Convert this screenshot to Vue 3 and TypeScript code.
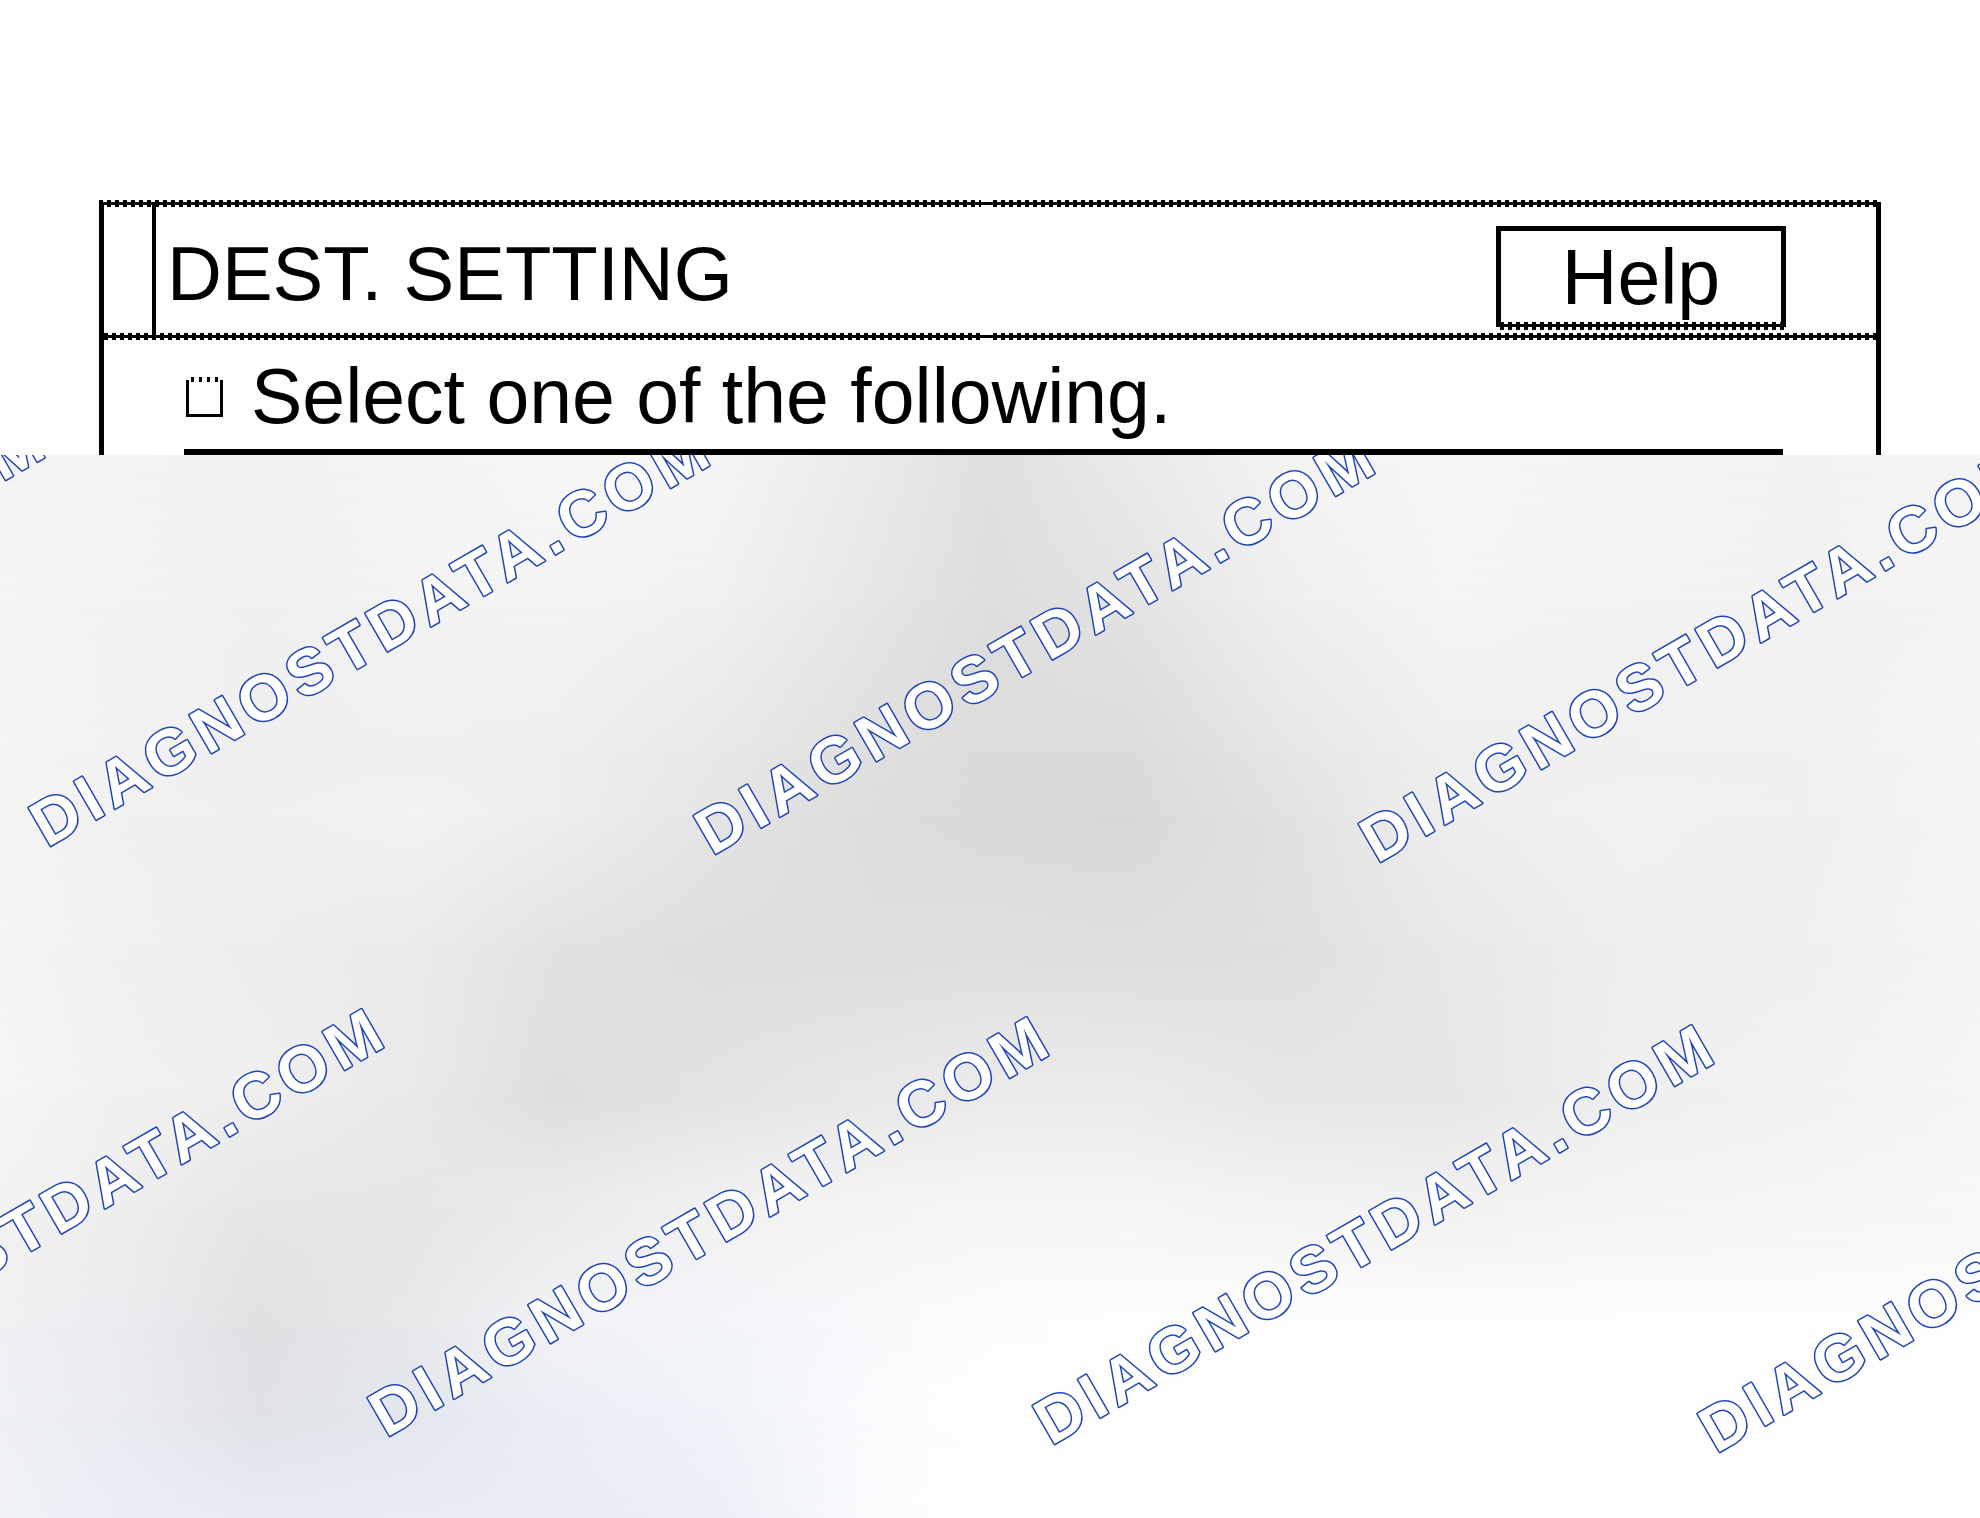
<script setup lang="ts">
import { ref } from 'vue'

interface Mark {
  x: number
  y: number
}

interface Band {
  at: number
  colors: string[]
}

const selected = ref<boolean>(false)

// Origins of the repeated watermark: each row shifts sideways and drops slightly per column.
const rows: Mark[] = [
  { x: -618, y: 385 },
  { x: -279, y: 975 },
]
const marks: Mark[] = rows.flatMap((row) =>
  [0, 1, 2, 3].map((column) => ({ x: row.x + column * 665, y: row.y + column * 8 })),
)

// Horizontal colour bands of the shaded backdrop; each one fades in over the band above it.
const stops: number[] = [0, 6, 13, 21, 28, 36, 44, 50, 57, 65, 73, 82, 91, 100]
const bands: Band[] = [
  { at: 0, colors: ['#f5f5f5', '#f4f4f4', '#f2f2f2', '#f5f5f5', '#f7f7f7', '#f6f6f6', '#ebebeb', '#e1e1e1', '#eaeaea', '#f4f4f4', '#f7f7f7', '#f5f5f5', '#f3f3f3', '#f5f5f5'] },
  { at: 14, colors: ['#f5f5f5', '#f3f3f3', '#f1f1f1', '#f3f3f3', '#f4f4f4', '#f1f1f1', '#e6e6e6', '#dedede', '#e3e3e3', '#efefef', '#f5f5f5', '#f3f3f3', '#f2f2f2', '#f4f4f4'] },
  { at: 28, colors: ['#f5f5f5', '#f2f2f2', '#efefef', '#f0f0f0', '#efefef', '#e8e8e8', '#dfdfdf', '#dbdbdb', '#dbdbdb', '#e6e6e6', '#efefef', '#f0f0f0', '#f1f1f1', '#f5f5f5'] },
  { at: 34, colors: ['#f5f5f5', '#f1f1f1', '#f0f0f0', '#f3f3f3', '#eeeeee', '#e5e5e5', '#dddddd', '#dadada', '#d9d9d9', '#e2e2e2', '#eeeeee', '#f2f2f2', '#f0f0f0', '#f5f5f5'] },
  { at: 46, colors: ['#f5f5f5', '#f1f1f1', '#eeeeee', '#ebebeb', '#e3e3e3', '#dfdfdf', '#dedede', '#dfdfdf', '#dedede', '#e0e0e0', '#e8e8e8', '#efefef', '#f0f0f0', '#f5f5f5'] },
  { at: 60, colors: ['#f6f6f6', '#f1f1f1', '#efefef', '#e9e9e9', '#dfdfdf', '#e3e3e3', '#e8e8e8', '#ebebeb', '#ebebeb', '#e6e6e6', '#e6e6e6', '#efefef', '#f2f2f2', '#f6f6f6'] },
  { at: 71, colors: ['#f2f2f2', '#eeeeee', '#e6e6e6', '#e6e6e6', '#ebebeb', '#f2f2f2', '#f5f5f5', '#f6f6f6', '#f6f6f6', '#f4f4f4', '#f2f2f2', '#f5f5f5', '#f6f6f6', '#f8f8f8'] },
  { at: 82, colors: ['#f0f1f3', '#ebecef', '#e0e1e3', '#e7e8ea', '#f2f3f6', '#f3f5f9', '#f8f9fb', '#fcfcfc', '#fdfdfd', '#fdfdfd', '#fdfdfd', '#fdfdfd', '#fdfdfd', '#fdfdfd'] },
  { at: 90, colors: ['#eff1f5', '#eaecf1', '#e0e2e7', '#e4e7ed', '#ebeef6', '#f0f3f9', '#fafbfd', '#fefefe', '#fefefe', '#fefefe', '#fefefe', '#fefefe', '#fefefe', '#fefefe'] },
  { at: 100, colors: ['#f0f2f6', '#eaeef7', '#e7ebf4', '#e7ecf5', '#e8edf6', '#ebeff7', '#fafbfd', '#fefefe', '#fefefe', '#fefefe', '#fefefe', '#fefefe', '#fefefe', '#fefefe'] },
]

function bandStyle(band: Band, index: number): Record<string, string> {
  const gradient = band.colors.map((color, i) => `${color} ${stops[i]}%`).join(', ')
  const style: Record<string, string> = { background: `linear-gradient(90deg, ${gradient})` }
  if (index > 0) {
    style.maskImage = `linear-gradient(transparent ${bands[index - 1].at}%, #000 ${band.at}%)`
  }
  return style
}
</script>

<template>
  <main class="page">
    <section class="panel">
      <div class="ticks"></div>
      <header class="bar">
        <div class="bar-cell"></div>
        <h1 class="title">DEST. SETTING</h1>
        <button class="help" type="button">Help</button>
      </header>
      <div class="ticks"></div>
      <div class="option">
        <input id="select-option" v-model="selected" class="box" type="checkbox" />
        <label for="select-option">Select one of the following.</label>
      </div>
      <div class="rule"></div>
    </section>

    <section class="preview">
      <div
        v-for="(band, index) in bands"
        :key="band.at"
        class="band"
        :style="bandStyle(band, index)"
      ></div>
      <svg class="marks" width="100%" height="100%" aria-hidden="true">
        <text
          v-for="mark in marks"
          :key="`${mark.x}-${mark.y}`"
          :transform="`translate(${mark.x} ${mark.y}) rotate(-30)`"
        >DIAGNOSTDATA.COM</text>
      </svg>
    </section>
  </main>
</template>

<style>
body {
  margin: 0;
  background: #fefefe;
}
</style>

<style scoped>
.page {
  display: flex;
  flex-direction: column;
  min-height: 100vh;
  box-sizing: border-box;
  padding-top: 203px;
  color: #000;
  font-family: "Liberation Sans", Arial, sans-serif;
}

.panel {
  margin: 0 5%;
  border: solid #000;
  border-width: 0 5px;
}

.ticks {
  height: 8px;
  background:
    linear-gradient(#000, #000) 0 3px / 100% 3px no-repeat,
    repeating-linear-gradient(90deg, #000 0 4px, transparent 4px 8px) 0 1px / calc(50% - 9px) 7px no-repeat,
    repeating-linear-gradient(90deg, #000 0 4px, transparent 4px 8px) 100% 1px / calc(50% - 3px) 7px no-repeat;
}

.ticks:first-child {
  margin: -4px -5px 0;
}

.bar {
  display: flex;
  height: 131px;
  margin: -3px 0;
}

.bar-cell {
  width: 48px;
  border-right: 4px solid #000;
}

.title {
  flex: 1;
  margin: 0 0 0 11px;
  font-size: 76px;
  font-weight: 400;
  line-height: 140px;
  white-space: nowrap;
}

.help {
  width: 290px;
  height: 104px;
  margin: 22px 90px 0 0;
  padding: 0 0 2px;
  border: 0;
  background:
    linear-gradient(#000, #000) 0 0 / 100% 5px no-repeat,
    linear-gradient(#000, #000) 0 0 / 5px calc(100% - 3px) no-repeat,
    linear-gradient(#000, #000) 100% 0 / 5px calc(100% - 3px) no-repeat,
    linear-gradient(#000, #000) 0 calc(100% - 3px) / 100% 3px no-repeat,
    repeating-linear-gradient(90deg, transparent 0 4px, #000 4px 8px) 0 100% / 100% 8px no-repeat;
  color: inherit;
  font: 77px/100px "Liberation Sans", Arial, sans-serif;
}

.option {
  display: flex;
  align-items: center;
  gap: 28px;
  box-sizing: border-box;
  height: 109px;
  padding: 4px 0 0 82px;
  font-size: 77px;
  line-height: 105px;
  white-space: nowrap;
}

.box {
  appearance: none;
  box-sizing: border-box;
  width: 37px;
  height: 40px;
  margin: 0;
  background:
    linear-gradient(#000, #000) 0 100% / 3px calc(100% - 3px) no-repeat,
    linear-gradient(#000, #000) 100% 100% / 3px calc(100% - 3px) no-repeat,
    linear-gradient(#000, #000) 0 100% / 100% 3px no-repeat,
    repeating-linear-gradient(90deg, #000 0 3px, transparent 3px 8px) 5px 0 / 28px 5px no-repeat;
}

.rule {
  height: 6px;
  margin: 0 93px 0 80px;
  background: #000;
}

.preview {
  position: relative;
  flex: 1;
  min-height: 1063px;
  overflow: hidden;
}

.band,
.marks {
  position: absolute;
  inset: 0;
}

.marks text {
  fill: #fff;
  stroke: #1f45b4;
  stroke-width: 3px;
  stroke-linejoin: round;
  paint-order: stroke;
  font-size: 64px;
  font-weight: 700;
  letter-spacing: 0.1em;
}
</style>
